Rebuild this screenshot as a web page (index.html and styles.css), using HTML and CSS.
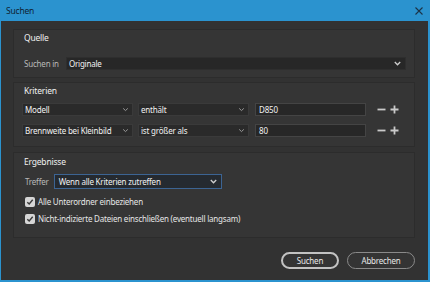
FILE: index.html
```html
<!DOCTYPE html>
<html lang="de">
<head>
  <meta charset="UTF-8">
  <title>Suchen</title>
  <link rel="stylesheet" href="styles.css">
</head>
<body>
  <div class="window">
    <div class="titlebar">
      <span class="title">Suchen</span>
      <svg class="close" width="8" height="8" viewBox="0 0 8 8"><path d="M0.5 0.5 L7.5 7.5 M7.5 0.5 L0.5 7.5" stroke="#1c3347" stroke-width="1.1"/></svg>
    </div>

    <div class="content">
      <div class="panel panel-source">
        <div class="panel-title">Quelle</div>
        <div class="row">
          <span class="label">Suchen in</span>
          <div class="select select-wide">
            <span>Originale</span>
            <svg class="chevron" width="7" height="5" viewBox="0 0 7 5"><path d="M0.8 1 L3.5 3.8 L6.2 1" fill="none" stroke="#cfcfcf" stroke-width="1.3"/></svg>
          </div>
        </div>
      </div>

      <div class="panel panel-criteria">
        <div class="panel-title">Kriterien</div>
        <div class="criteria-row">
          <div class="select select-field">
            <span>Modell</span>
            <svg class="chevron" width="7" height="5" viewBox="0 0 7 5"><path d="M1.2 1.4 L3.5 3.6 L5.8 1.4" fill="none" stroke="#9a9a9a" stroke-width="1"/></svg>
          </div>
          <div class="select select-field">
            <span>enthält</span>
            <svg class="chevron" width="7" height="5" viewBox="0 0 7 5"><path d="M1.2 1.4 L3.5 3.6 L5.8 1.4" fill="none" stroke="#9a9a9a" stroke-width="1"/></svg>
          </div>
          <div class="input">D850</div>
          <div class="pm">
            <svg width="9" height="9" viewBox="0 0 9 9"><path d="M0.5 4.5 H8.5" stroke="#c9c9c9" stroke-width="1.8"/></svg>
            <svg width="9" height="9" viewBox="0 0 9 9"><path d="M0.5 4.5 H8.5 M4.5 0.5 V8.5" stroke="#c9c9c9" stroke-width="1.8"/></svg>
          </div>
        </div>
        <div class="criteria-row">
          <div class="select select-field">
            <span>Brennweite bei Kleinbild</span>
            <svg class="chevron" width="7" height="5" viewBox="0 0 7 5"><path d="M1.2 1.4 L3.5 3.6 L5.8 1.4" fill="none" stroke="#9a9a9a" stroke-width="1"/></svg>
          </div>
          <div class="select select-field">
            <span>ist größer als</span>
            <svg class="chevron" width="7" height="5" viewBox="0 0 7 5"><path d="M1.2 1.4 L3.5 3.6 L5.8 1.4" fill="none" stroke="#9a9a9a" stroke-width="1"/></svg>
          </div>
          <div class="input">80</div>
          <div class="pm">
            <svg width="9" height="9" viewBox="0 0 9 9"><path d="M0.5 4.5 H8.5" stroke="#c9c9c9" stroke-width="1.8"/></svg>
            <svg width="9" height="9" viewBox="0 0 9 9"><path d="M0.5 4.5 H8.5 M4.5 0.5 V8.5" stroke="#c9c9c9" stroke-width="1.8"/></svg>
          </div>
        </div>
      </div>

      <div class="panel panel-results">
        <div class="panel-title">Ergebnisse</div>
        <div class="row row-match">
          <span class="label">Treffer</span>
          <div class="select select-match">
            <span>Wenn alle Kriterien zutreffen</span>
            <svg class="chevron" width="7" height="5" viewBox="0 0 7 5"><path d="M0.8 1 L3.5 3.8 L6.2 1" fill="none" stroke="#cfcfcf" stroke-width="1.3"/></svg>
          </div>
        </div>
        <label class="check">
          <span class="box"><svg width="8" height="8" viewBox="0 0 8 8"><path d="M1.3 4.2 L3.2 6 L6.7 1.8" fill="none" stroke="#3a3a3a" stroke-width="1.4"/></svg></span>
          Alle Unterordner einbeziehen
        </label>
        <label class="check">
          <span class="box"><svg width="8" height="8" viewBox="0 0 8 8"><path d="M1.3 4.2 L3.2 6 L6.7 1.8" fill="none" stroke="#3a3a3a" stroke-width="1.4"/></svg></span>
          Nicht-indizierte Dateien einschließen (eventuell langsam)
        </label>
      </div>

      <div class="buttons">
        <button class="btn btn-default">Suchen</button>
        <button class="btn">Abbrechen</button>
      </div>
    </div>
  </div>
</body>
</html>
```

FILE: styles.css
```css
body {
  margin: 0;
  padding: 0;
  font-family: 'Noto Sans', 'Open Sans', sans-serif;
  font-size: 8px;
  letter-spacing: -0.2px;
  color: #dcdcdc;
}

.window {
  width: 430px;
  height: 282px;
  background-color: #2b93cf;
  display: flex;
  flex-direction: column;
  box-sizing: border-box;
}

.titlebar {
  height: 21px;
  display: flex;
  align-items: center;
  justify-content: space-between;
  padding: 0 6px 0 6px;
}

.title {
  color: #0f2232;
  font-size: 8.5px;
}

.close {
  margin-right: 1px;
}

.content {
  flex: 1;
  background-color: #323232;
  margin: 0 2px 2px 1px;
  padding: 8px 13px 0 12px;
  display: flex;
  flex-direction: column;
  gap: 4px;
}

.panel {
  background-color: #353535;
  border: 1px solid #2c2c2c;
  box-sizing: border-box;
}

.panel-title {
  color: #f0f0f0;
  font-size: 8.5px;
  line-height: 12px;
}

.panel-source {
  height: 49px;
  padding: 2px 8px 0 10px;
}

.panel-source .panel-title {
  margin-bottom: 13px;
}

.row {
  display: flex;
  align-items: center;
}

.label {
  color: #b9b9b9;
  margin-right: 7px;
}

.select {
  display: flex;
  align-items: center;
  justify-content: space-between;
  height: 13px;
  background-color: #272727;
  border: 1px solid #2e2e2e;
  box-sizing: border-box;
  padding: 0 4px 0 2px;
  color: #f2f2f2;
}

.select-wide {
  flex: 1;
}

.panel-criteria {
  height: 65px;
  padding: 2px 0 0 8px;
}

.panel-criteria .panel-title {
  margin-left: 2px;
  margin-bottom: 6px;
}

.criteria-row {
  display: flex;
  align-items: center;
  gap: 5px;
  margin-bottom: 8px;
}

.select-field {
  width: 111px;
  border-color: #3a3a3a;
  background-color: #2a2a2a;
  padding-right: 3px;
}

.input {
  width: 111px;
  height: 13px;
  background-color: #272727;
  border: 1px solid #444;
  box-sizing: border-box;
  padding: 0 3px;
  line-height: 11px;
  color: #f2f2f2;
  margin-left: 1px;
}

.pm {
  display: flex;
  gap: 4px;
  margin-left: 6px;
}

.pm svg {
  display: block;
}

.panel-results {
  height: 86px;
  padding: 3px 8px 0 10px;
  margin-top: 1px;
}

.row-match {
  margin-top: 6px;
  margin-bottom: 7px;
}

.row-match .label {
  margin-left: 1px;
  margin-right: 5px;
}

.select-match {
  width: 168px;
  height: 15px;
  border: 1px solid #3c6493;
  background-color: #252a30;
  padding-left: 4px;
}

.check {
  display: flex;
  align-items: center;
  gap: 3px;
  margin-left: 1px;
  height: 11px;
  margin-bottom: 6px;
  color: #e6e6e6;
}

.box {
  width: 10px;
  height: 10px;
  border-radius: 2px;
  background-color: #d6d6d6;
  display: flex;
  align-items: center;
  justify-content: center;
}

.buttons {
  display: flex;
  justify-content: flex-end;
  gap: 8px;
  margin-top: 10px;
  padding-right: 0;
}

.btn {
  font-family: 'Noto Sans', 'Open Sans', sans-serif;
  font-size: 8px;
  letter-spacing: -0.2px;
  color: #e8e8e8;
  background-color: #343434;
  border: 1px solid #8a8a8a;
  border-radius: 9px;
  height: 17px;
  padding: 0;
  width: 68px;
}

.btn-default {
  width: 58px;
  border: 2px solid #c2c2c2;
}
```
